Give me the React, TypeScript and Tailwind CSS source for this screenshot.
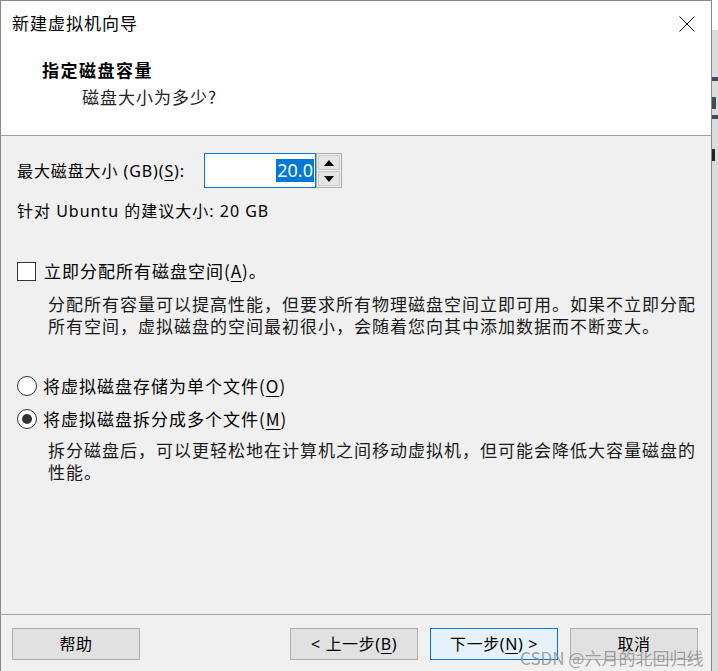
import React from 'react';

// Windows-style "New Virtual Machine Wizard" page: disk capacity step
const cjk = "font-['Noto_Sans_CJK_SC','Noto_Sans',sans-serif]";
// YaHei-like UI text: Latin from Noto Sans, CJK falls back to Noto Sans CJK
const ui = "font-['Noto_Sans','Noto_Sans_CJK_SC',sans-serif]";

function Key({ k }: { k: string }) {
  return <span className="underline underline-offset-[3px] decoration-1">{k}</span>;
}

function Radio({ checked }: { checked?: boolean }) {
  return (
    <span className="w-[20px] h-[20px] rounded-full border border-[#333] bg-white flex items-center justify-center shrink-0">
      {checked && <span className="w-[10px] h-[10px] rounded-full bg-[#333]" />}
    </span>
  );
}

function Btn({ children, primary }: { children: React.ReactNode; primary?: boolean }) {
  return (
    <div
      className={
        `w-[128px] h-[32px] flex items-center justify-center text-[16px] tracking-[0.6px] text-black border ${ui} ` +
        (primary ? 'bg-[#e5f1fb] border-[#0078d7]' : 'bg-[#e1e1e1] border-[#adadad]')
      }
    >
      {children}
    </div>
  );
}

export default function App() {
  return (
    <div className={`w-[718px] h-[671px] flex bg-[#f0f0f0] overflow-hidden relative ${cjk}`}>
      <div className="w-[712px] h-full flex flex-col border-l border-t border-r border-[#8a8a8a]">
        {/* header */}
        <div className="h-[135px] shrink-0 bg-white border-b border-[#a0a0a0] flex flex-col">
          <div className="flex items-center pl-[11px] pr-[16px] pt-[10px]">
            <span className="text-[17px] leading-[24px] tracking-[1px] text-black">新建虚拟机向导</span>
            <span className="flex-1" />
            <svg width="16" height="16" viewBox="0 0 16 16" className="mt-[1px]">
              <path d="M0.5 0.5L15.5 15.5M15.5 0.5L0.5 15.5" stroke="#111" strokeWidth="1" fill="none" />
            </svg>
          </div>
          <div className="pl-[41px] mt-[23px] text-[17px] leading-[24px] tracking-[1.5px] font-bold text-black">
            指定磁盘容量
          </div>
          <div className="pl-[81px] mt-[3px] text-[17px] leading-[24px] tracking-[1px] text-[#222]">
            磁盘大小为多少?
          </div>
        </div>

        {/* body */}
        <div className="flex-1 flex flex-col pl-[16px] text-black">
          <div className="flex items-center mt-[17px] h-[35px]">
            <span className={`w-[187px] shrink-0 text-[16px] leading-[24px] tracking-[0.9px] ${ui}`}>
              最大磁盘大小 (GB)(<Key k="S" />):
            </span>
            <div className="w-[112px] h-[35px] border border-[#0078d7] bg-white flex items-center justify-end pr-[1px]">
              <span className={`bg-[#0078d7] text-white text-[18px] leading-[23px] px-[1px] ${ui}`}>20.0</span>
            </div>
            <div className="w-[26px] h-[35px] border border-[#adadad] flex flex-col bg-[#f0f0f0]">
              <div className="flex-1 m-[1px] mb-0 bg-[#e5e5e5] border border-[#c8c8c8] flex items-center justify-center">
                <svg width="10" height="6" viewBox="0 0 10 6">
                  <path d="M0 6L5 0L10 6Z" fill="#000" />
                </svg>
              </div>
              <div className="flex-1 m-[1px] bg-[#e5e5e5] border border-[#c8c8c8] flex items-center justify-center">
                <svg width="10" height="6" viewBox="0 0 10 6">
                  <path d="M0 0L10 0L5 6Z" fill="#000" />
                </svg>
              </div>
            </div>
          </div>

          <div className={`mt-[11px] text-[16px] leading-[24px] tracking-[1px] ${ui}`}>
            针对 Ubuntu 的建议大小: 20 GB
          </div>

          <div className="flex items-center mt-[36px] h-[24px]">
            <span className="w-[19px] h-[19px] border border-[#333] bg-white shrink-0" />
            <span className="ml-[8px] text-[17px] leading-[24px] tracking-[1px]">
              立即分配所有磁盘空间(<Key k="A" />)。
            </span>
          </div>
          <p className="ml-[31px] mt-[10px] w-[650px] text-[17px] leading-[22px] tracking-[1px] text-[#1a1a1a]">
            分配所有容量可以提高性能，但要求所有物理磁盘空间立即可用。如果不立即分配所有空间，虚拟磁盘的空间最初很小，会随着您向其中添加数据而不断变大。
          </p>

          <div className="flex items-center mt-[37px] h-[24px]">
            <Radio />
            <span className="ml-[6px] text-[17px] leading-[24px] tracking-[1px]">
              将虚拟磁盘存储为单个文件(<Key k="O" />)
            </span>
          </div>
          <div className="flex items-center mt-[9px] h-[24px]">
            <Radio checked />
            <span className="ml-[6px] text-[17px] leading-[24px] tracking-[1px]">
              将虚拟磁盘拆分成多个文件(<Key k="M" />)
            </span>
          </div>
          <p className="ml-[31px] mt-[8px] w-[650px] text-[17px] leading-[22px] tracking-[1px] text-[#1a1a1a]">
            拆分磁盘后，可以更轻松地在计算机之间移动虚拟机，但可能会降低大容量磁盘的性能。
          </p>
        </div>

        {/* footer */}
        <div className="h-[57px] shrink-0 border-t border-[#a0a0a0] flex items-start pt-[13px] pl-[11px] pr-[13px]">
          <Btn>帮助</Btn>
          <span className="flex-1" />
          <div className="flex gap-[12px]">
            <Btn>
              &lt; 上一步(<Key k="B" />)
            </Btn>
            <Btn primary>
              下一步(<Key k="N" />) &gt;
            </Btn>
            <Btn>取消</Btn>
          </div>
        </div>
      </div>

      {/* window behind, peeking at the right edge */}
      <div className="w-[6px] h-full flex flex-col bg-[#dcdcdc]">
        <div className="h-[30px] bg-white" />
        <div className="mt-[47px] h-[4px] bg-[#3d4b5c]" />
        <div className="mt-[16px] h-[12px] w-[4px] bg-[#3d4b5c]" />
        <div className="mt-[6px] h-[4px] bg-[#3d4b5c]" />
        <div className="mt-[30px] h-[12px] w-[3px] bg-[#222]" />
      </div>

      {/* watermark */}
      <div className="absolute left-[520px] top-[646px] text-[17px] leading-[24px] text-[#8c8c8c]/80 whitespace-nowrap pointer-events-none">
        CSDN @六月的北回归线
      </div>
    </div>
  );
}
